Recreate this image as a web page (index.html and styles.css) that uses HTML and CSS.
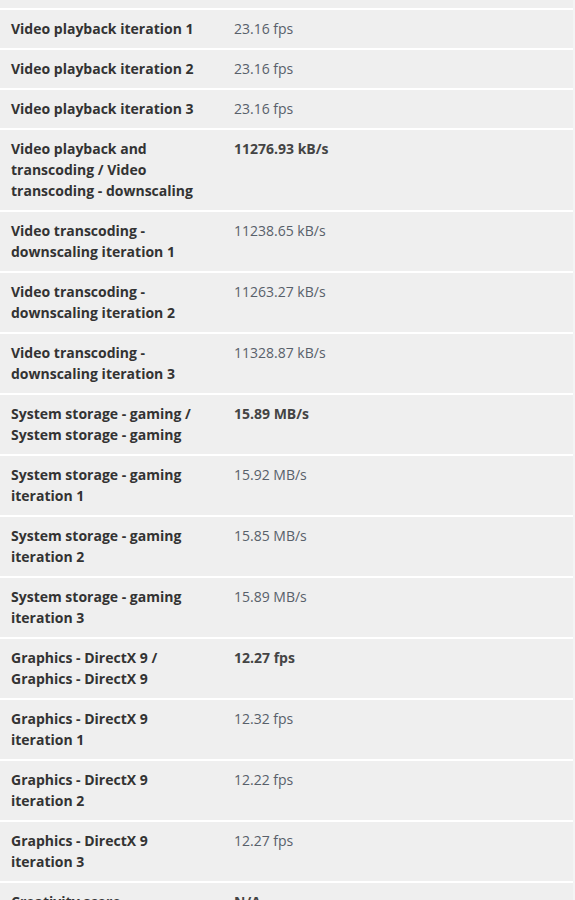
FILE: index.html
```html
<!DOCTYPE html>
<html>
<head>
<meta charset="utf-8">
<link rel="stylesheet" href="styles.css">
</head>
<body>
<div class="table">
  <div class="row cut"></div>
  <div class="row"><div class="label">Video playback iteration 1</div><div class="value">23.16 fps</div></div>
  <div class="row"><div class="label">Video playback iteration 2</div><div class="value">23.16 fps</div></div>
  <div class="row"><div class="label">Video playback iteration 3</div><div class="value">23.16 fps</div></div>
  <div class="row"><div class="label">Video playback and transcoding / Video transcoding - downscaling</div><div class="value strong">11276.93 kB/s</div></div>
  <div class="row"><div class="label">Video transcoding - downscaling iteration 1</div><div class="value">11238.65 kB/s</div></div>
  <div class="row"><div class="label">Video transcoding - downscaling iteration 2</div><div class="value">11263.27 kB/s</div></div>
  <div class="row"><div class="label">Video transcoding - downscaling iteration 3</div><div class="value">11328.87 kB/s</div></div>
  <div class="row"><div class="label">System storage - gaming / System storage - gaming</div><div class="value strong">15.89 MB/s</div></div>
  <div class="row"><div class="label">System storage - gaming iteration 1</div><div class="value">15.92 MB/s</div></div>
  <div class="row"><div class="label">System storage - gaming iteration 2</div><div class="value">15.85 MB/s</div></div>
  <div class="row"><div class="label">System storage - gaming iteration 3</div><div class="value">15.89 MB/s</div></div>
  <div class="row"><div class="label">Graphics - DirectX 9 / Graphics - DirectX 9</div><div class="value strong">12.27 fps</div></div>
  <div class="row"><div class="label">Graphics - DirectX 9 iteration 1</div><div class="value">12.32 fps</div></div>
  <div class="row"><div class="label">Graphics - DirectX 9 iteration 2</div><div class="value">12.22 fps</div></div>
  <div class="row"><div class="label">Graphics - DirectX 9 iteration 3</div><div class="value">12.27 fps</div></div>
  <div class="row"><div class="label">Creativity score</div><div class="value strong">N/A</div></div>
</div>
</body>
</html>
```
FILE: styles.css
```css
html, body {
  margin: 0;
  padding: 0;
  background: #f4f4f4;
}
.table {
  width: 573px;
  background: #ffffff;
  display: flex;
  flex-direction: column;
  gap: 2px;
  font-family: "Open Sans", "Liberation Sans", sans-serif;
  font-size: 14px;
  line-height: 21px;
}
.row {
  background: #efefef;
  display: grid;
  grid-template-columns: 223px 1fr;
  padding: 8px 11px 9px 11px;
}
.row.cut {
  height: 8px;
  padding: 0;
}
.label {
  font-weight: 700;
  color: #333333;
  padding-right: 32px;
}
.value {
  color: #58606a;
}
.value.strong {
  font-weight: 700;
  color: #444444;
}
```
